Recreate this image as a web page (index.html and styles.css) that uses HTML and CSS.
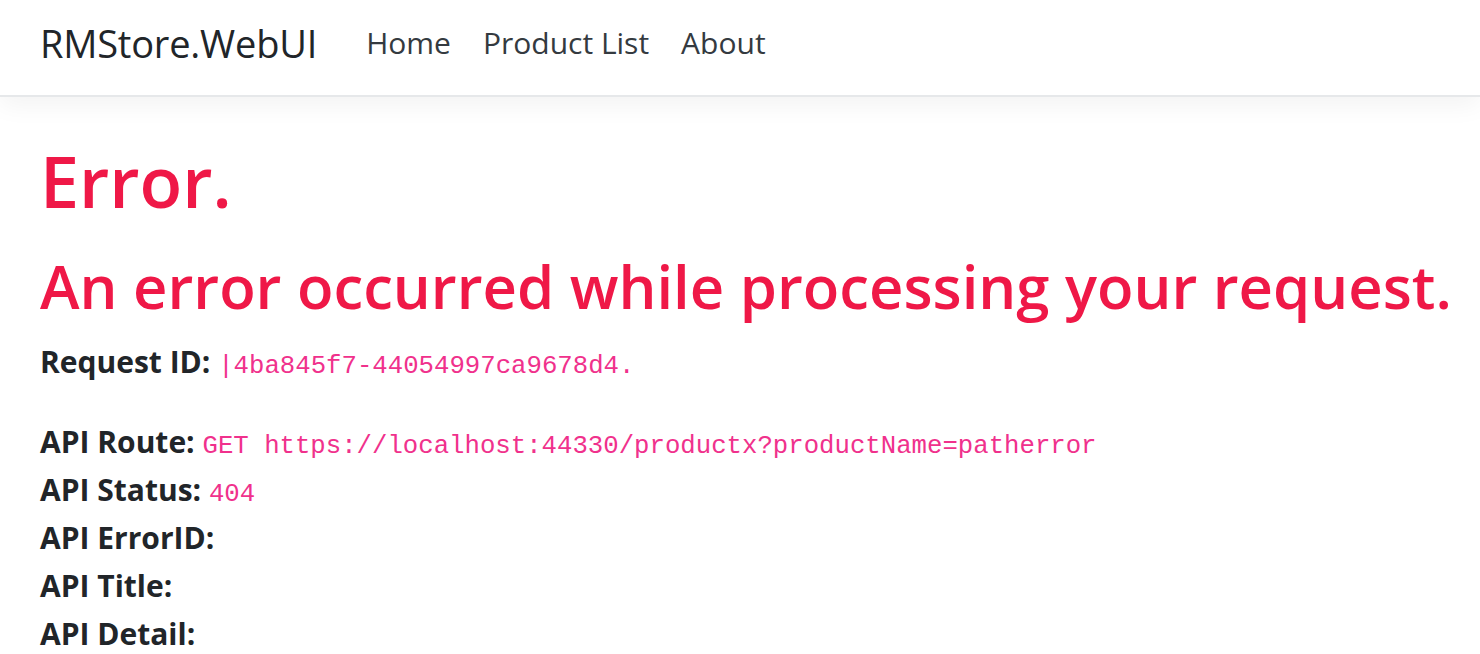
FILE: index.html
```html
<!DOCTYPE html>
<html lang="en">
<head>
<meta charset="utf-8">
<title>Error - RMStore.WebUI</title>
<link rel="stylesheet" href="styles.css">
</head>
<body>
<header class="navbar">
  <a class="brand" href="#">RMStore.WebUI</a>
  <nav class="nav">
    <a class="nav-link" href="#">Home</a>
    <a class="nav-link" href="#">Product List</a>
    <a class="nav-link" href="#">About</a>
  </nav>
</header>
<main class="main">
  <h1 class="title">Error.</h1>
  <h2 class="subtitle">An error occurred while processing your request.</h2>
  <p class="para"><strong>Request ID:</strong> <code>|4ba845f7-44054997ca9678d4.</code></p>
  <div class="details">
    <div class="row"><strong>API Route:</strong> <code>GET https://localhost:44330/productx?productName=patherror</code></div>
    <div class="row"><strong>API Status:</strong> <code>404</code></div>
    <div class="row"><strong>API ErrorID:</strong></div>
    <div class="row"><strong>API Title:</strong></div>
    <div class="row"><strong>API Detail:</strong></div>
  </div>
</main>
</body>
</html>
```

FILE: styles.css
```css
html, body {
  margin: 0;
  padding: 0;
  background: #fff;
}
body {
  font-family: "Open Sans", "Noto Sans", sans-serif;
  color: #212529;
  font-size: 30px;
  line-height: 48px;
  overflow: hidden;
}
.navbar {
  display: flex;
  align-items: center;
  height: 97px;
  padding: 0 40px;
  box-sizing: border-box;
  border-bottom: 2px solid #e6e8ea;
  box-shadow: 0 8px 24px rgba(0, 0, 0, 0.05);
  background: #fff;
}
.brand {
  font-size: 38px;
  color: #212529;
  text-decoration: none;
  margin-right: 33px;
  margin-top: -10px;
  letter-spacing: -0.2px;
}
.nav {
  display: flex;
  margin-top: -10px;
}
.nav-link {
  font-size: 30px;
  color: #343a40;
  text-decoration: none;
  padding: 0 16px;
}
.main {
  padding: 36px 40px 0;
}
.title {
  margin: 0 0 19px;
  font-size: 70px;
  line-height: 96px;
  font-weight: 600;
  color: #ef1847;
}
.subtitle {
  margin: 0 0 13px;
  font-size: 59.8px;
  line-height: 77px;
  font-weight: 600;
  color: #ef1847;
  white-space: nowrap;
}
.para {
  margin: 0 0 32px;
}
.row {
  height: 48px;
}
strong {
  font-weight: 700;
}
code {
  font-family: "Liberation Mono", "DejaVu Sans Mono", monospace;
  font-size: 25.7px;
  line-height: 20px;
  color: #f0318c;
}
```
